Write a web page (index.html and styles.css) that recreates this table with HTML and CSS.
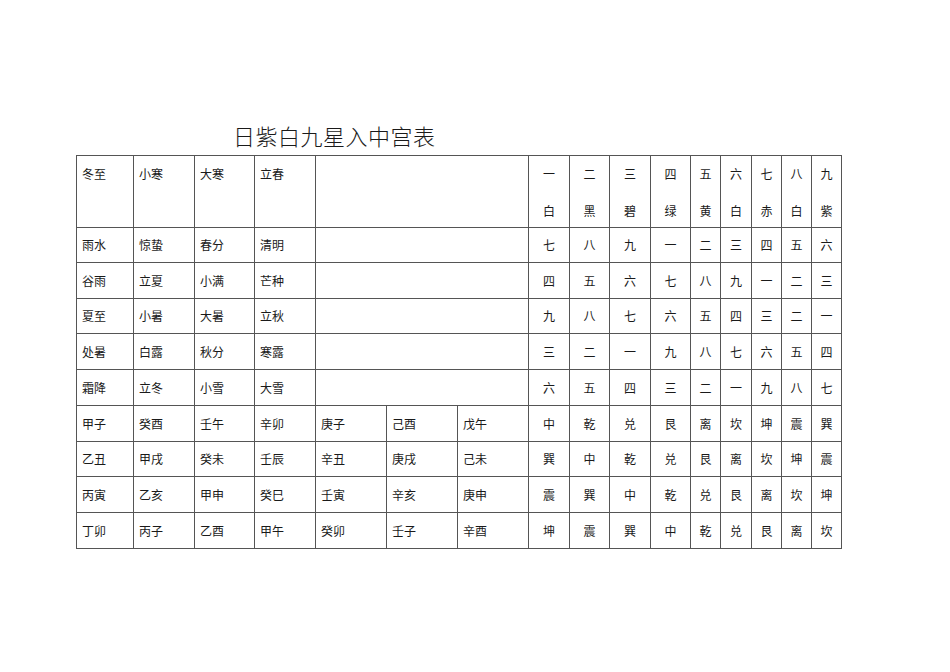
FILE: index.html
```html
<!DOCTYPE html>
<html lang="zh-CN">
<head>
<meta charset="utf-8">
<title>日紫白九星入中宫表</title>
<link rel="stylesheet" href="styles.css">
</head>
<body>
<div class="sheet">
  <h1 class="title">日紫白九星入中宫表</h1>
  <table class="grid">
    <colgroup>
      <col class="w57"><col class="w61"><col class="w60"><col class="w61">
      <col class="w71"><col class="w71"><col class="w71">
      <col class="w41"><col class="w40"><col class="w41"><col class="w40">
      <col class="w30"><col class="w31"><col class="w30"><col class="w30"><col class="w30">
    </colgroup>
    <tbody>
      <tr class="r-tall">
        <td>冬至</td><td>小寒</td><td>大寒</td><td>立春</td><td colspan="3"></td>
        <td class="c"><div class="stack"><span>一</span><span>白</span></div></td>
        <td class="c"><div class="stack"><span>二</span><span>黑</span></div></td>
        <td class="c"><div class="stack"><span>三</span><span>碧</span></div></td>
        <td class="c"><div class="stack"><span>四</span><span>绿</span></div></td>
        <td class="c"><div class="stack"><span>五</span><span>黄</span></div></td>
        <td class="c"><div class="stack"><span>六</span><span>白</span></div></td>
        <td class="c"><div class="stack"><span>七</span><span>赤</span></div></td>
        <td class="c"><div class="stack"><span>八</span><span>白</span></div></td>
        <td class="c"><div class="stack"><span>九</span><span>紫</span></div></td>
      </tr>
      <tr class="r35">
        <td>雨水</td><td>惊蛰</td><td>春分</td><td>清明</td><td colspan="3"></td>
        <td class="c">七</td><td class="c">八</td><td class="c">九</td><td class="c">一</td><td class="c">二</td><td class="c">三</td><td class="c">四</td><td class="c">五</td><td class="c">六</td>
      </tr>
      <tr class="r36">
        <td>谷雨</td><td>立夏</td><td>小满</td><td>芒种</td><td colspan="3"></td>
        <td class="c">四</td><td class="c">五</td><td class="c">六</td><td class="c">七</td><td class="c">八</td><td class="c">九</td><td class="c">一</td><td class="c">二</td><td class="c">三</td>
      </tr>
      <tr class="r35">
        <td>夏至</td><td>小暑</td><td>大暑</td><td>立秋</td><td colspan="3"></td>
        <td class="c">九</td><td class="c">八</td><td class="c">七</td><td class="c">六</td><td class="c">五</td><td class="c">四</td><td class="c">三</td><td class="c">二</td><td class="c">一</td>
      </tr>
      <tr class="r36">
        <td>处暑</td><td>白露</td><td>秋分</td><td>寒露</td><td colspan="3"></td>
        <td class="c">三</td><td class="c">二</td><td class="c">一</td><td class="c">九</td><td class="c">八</td><td class="c">七</td><td class="c">六</td><td class="c">五</td><td class="c">四</td>
      </tr>
      <tr class="r36">
        <td>霜降</td><td>立冬</td><td>小雪</td><td>大雪</td><td colspan="3"></td>
        <td class="c">六</td><td class="c">五</td><td class="c">四</td><td class="c">三</td><td class="c">二</td><td class="c">一</td><td class="c">九</td><td class="c">八</td><td class="c">七</td>
      </tr>
      <tr class="r36">
        <td>甲子</td><td>癸酉</td><td>壬午</td><td>辛卯</td><td>庚子</td><td>己酉</td><td>戊午</td>
        <td class="c">中</td><td class="c">乾</td><td class="c">兑</td><td class="c">艮</td><td class="c">离</td><td class="c">坎</td><td class="c">坤</td><td class="c">震</td><td class="c">巽</td>
      </tr>
      <tr class="r35">
        <td>乙丑</td><td>甲戌</td><td>癸未</td><td>壬辰</td><td>辛丑</td><td>庚戌</td><td>己未</td>
        <td class="c">巽</td><td class="c">中</td><td class="c">乾</td><td class="c">兑</td><td class="c">艮</td><td class="c">离</td><td class="c">坎</td><td class="c">坤</td><td class="c">震</td>
      </tr>
      <tr class="r36">
        <td>丙寅</td><td>乙亥</td><td>甲申</td><td>癸巳</td><td>壬寅</td><td>辛亥</td><td>庚申</td>
        <td class="c">震</td><td class="c">巽</td><td class="c">中</td><td class="c">乾</td><td class="c">兑</td><td class="c">艮</td><td class="c">离</td><td class="c">坎</td><td class="c">坤</td>
      </tr>
      <tr class="r36">
        <td>丁卯</td><td>丙子</td><td>乙酉</td><td>甲午</td><td>癸卯</td><td>壬子</td><td>辛酉</td>
        <td class="c">坤</td><td class="c">震</td><td class="c">巽</td><td class="c">中</td><td class="c">乾</td><td class="c">兑</td><td class="c">艮</td><td class="c">离</td><td class="c">坎</td>
      </tr>
    </tbody>
  </table>
</div>
</body>
</html>
```

FILE: styles.css
```css
html, body {
  margin: 0;
  padding: 0;
  background: #ffffff;
}

body {
  font-family: "Noto Sans CJK SC", "Noto Sans", sans-serif;
  color: #1a1a1a;
}

.sheet {
  padding: 124px 0 0 76px;
}

.title {
  margin: 0 0 8px 157px;
  font-size: 22px;
  line-height: 23px;
  font-weight: 300;
  color: #1a1a1a;
  letter-spacing: 0.5px;
}

.grid {
  border-collapse: collapse;
  table-layout: fixed;
  width: 765px;
  font-size: 12px;
}

.grid td {
  border: 1px solid #555;
  padding: 0 0 0 5px;
  line-height: 20px;
  vertical-align: middle;
  white-space: nowrap;
  overflow: hidden;
}

.grid td.c {
  padding: 0;
  text-align: center;
}

.grid .r-tall td {
  vertical-align: top;
  height: 63px;
  padding-top: 8px;
}

.stack {
  display: flex;
  flex-direction: column;
  align-items: center;
  gap: 17px;
}

.r35 td { height: 34px; }
.r36 td { height: 35px; }

.w57 { width: 57px; }
.w61 { width: 61px; }
.w60 { width: 60px; }
.w71 { width: 71px; }
.w41 { width: 41px; }
.w40 { width: 40px; }
.w31 { width: 31px; }
.w30 { width: 30px; }
```
